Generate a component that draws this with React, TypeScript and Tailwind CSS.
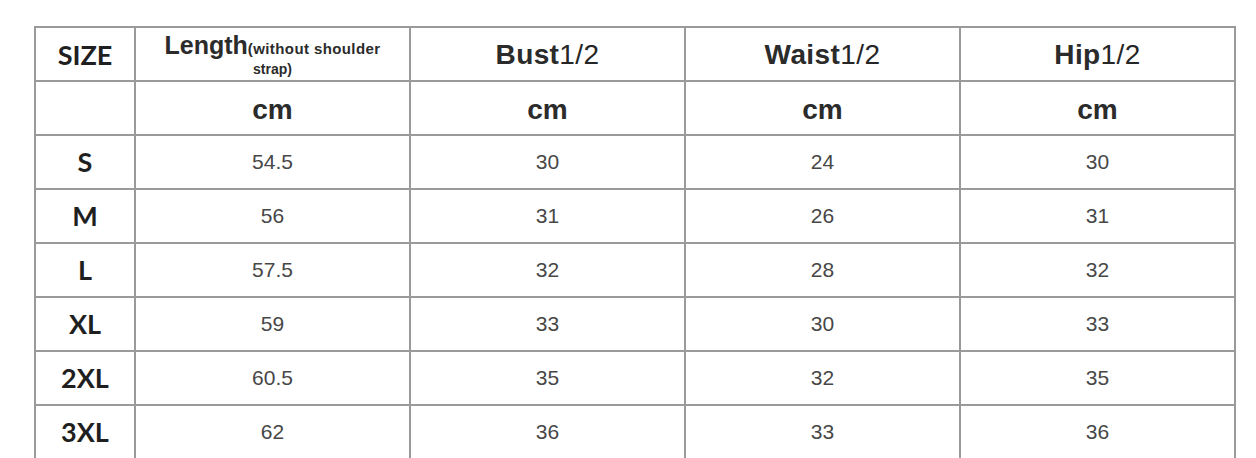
const rows: [string, string, string, string, string][] = [
	["S", "54.5", "30", "24", "30"],
	["M", "56", "31", "26", "31"],
	["L", "57.5", "32", "28", "32"],
	["XL", "59", "33", "30", "33"],
	["2XL", "60.5", "35", "32", "35"],
	["3XL", "62", "36", "33", "36"],
]

const cell = "flex h-[52px] items-center justify-center bg-white"
const arial = "font-['Liberation_Sans',Arial,sans-serif]"
const sizeFont = "font-['Lato','Open_Sans',sans-serif] text-[27px] font-bold text-[#1f1f1f]"

function Measure({ name }: { name: string }): React.ReactElement {
	return (
		<div className={`${cell} ${arial} pt-[2px] text-[28px] font-bold tracking-[0.4px] text-[#2b2b2b]`}>
			{name}
			<span className="font-normal text-[#262626]">1/2</span>
		</div>
	)
}

function App(): React.ReactElement {
	return (
		<main className="min-h-screen overflow-hidden bg-white pl-[34px] pt-[26px]">
			<div className="grid w-fit grid-cols-[98px_273px_273px_273px_273px] gap-[2px] bg-[#9a9a9a] p-[2px]">
				<div className={`${cell} ${sizeFont} pt-[2px]`}>SIZE</div>
				<div className={`${cell} ${arial} flex-col pt-[3px] font-bold text-[#2b2b2b]`}>
					<p className="text-center leading-[22px]">
						<span className="text-[25px]">Length</span>
						<span className="text-[15px] tracking-[0.4px]">(without shoulder</span>
					</p>
					<p className="text-[14px] leading-[18px]">strap)</p>
				</div>
				<Measure name="Bust" />
				<Measure name="Waist" />
				<Measure name="Hip" />

				<div className={cell} />
				{[0, 1, 2, 3].map((i) => (
					<div key={i} className={`${cell} ${arial} pt-[3px] text-[28px] font-bold text-[#2b2b2b]`}>
						cm
					</div>
				))}

				{rows.map((row) => (
					<>
						<div key={row[0]} className={`${cell} ${sizeFont}`}>
							{row[0]}
						</div>
						{row.slice(1).map((value, i) => (
							<div key={`${row[0]}-${i}`} className={`${cell} ${arial} text-[21px] text-[#474747]`}>
								{value}
							</div>
						))}
					</>
				))}
			</div>
		</main>
	)
}

export default App
